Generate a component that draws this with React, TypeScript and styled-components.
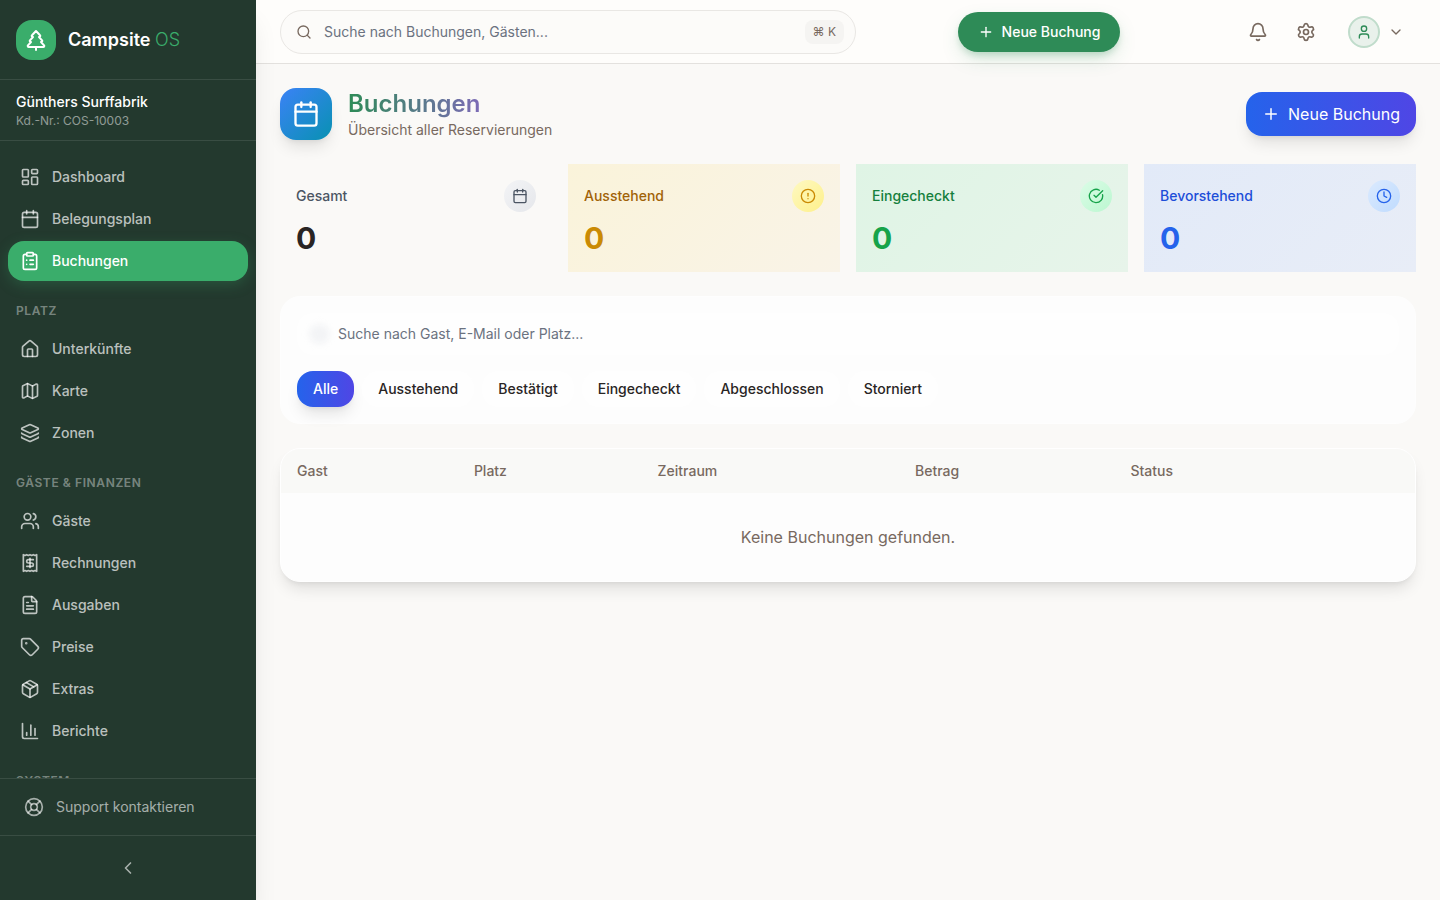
import React from "react";
import styled, { createGlobalStyle, css } from "styled-components";
import {
  LayoutDashboard, Calendar, ClipboardList, House, Map as MapIcon, Layers, Users, Receipt,
  FileText, Tag, Package, ChartColumn, LifeBuoy, ChevronLeft, ChevronDown, TreePine, Search,
  Plus, Bell, Settings, User, CircleAlert, CircleCheckBig, Clock,
  type LucideIcon,
} from "lucide-react";

const GlobalStyle = createGlobalStyle`
  *, *::before, *::after { box-sizing: border-box; }
  body {
    margin: 0;
    background: #faf9f7;
    color: #292524;
    font-family: Inter, "Liberation Sans", sans-serif;
    font-size: 16px;
    line-height: 24px;
  }
  button, input { font: inherit; color: inherit; }
  button { border: 0; background: none; padding: 0; cursor: pointer; }
  a { color: inherit; text-decoration: none; }
  h1, h2, p, ul { margin: 0; padding: 0; }
  ul { list-style: none; }
  svg { display: block; flex-shrink: 0; }
`;

const Shell = styled.div`
  display: flex;
  height: 100vh;
  overflow: hidden;
`;

/* ---------- Sidebar ---------- */

const Sidebar = styled.aside`
  display: flex;
  flex-direction: column;
  flex: 0 0 256px;
  z-index: 1;
  background: #23392e;
  color: #fff;
  box-shadow: 0 20px 25px -5px rgba(0, 0, 0, 0.1), 0 8px 10px -6px rgba(0, 0, 0, 0.1);
`;

const Brand = styled.a`
  display: flex;
  align-items: center;
  gap: 12px;
  height: 80px;
  padding: 0 16px;
  border-bottom: 1px solid rgba(255, 255, 255, 0.1);
`;

const BrandMark = styled.span`
  display: grid;
  place-items: center;
  width: 40px;
  height: 40px;
  border-radius: 16px;
  background: #3aad6b;
`;

const BrandName = styled.span`
  font-size: 18px;
  line-height: 28px;
  font-weight: 600;
`;

const BrandSuffix = styled.span`
  font-weight: 300;
  color: #3aad6b;
`;

const Tenant = styled.div`
  padding: 12px 16px 10px;
  border-bottom: 1px solid rgba(255, 255, 255, 0.1);
`;

const TenantName = styled.p`
  font-size: 14px;
  line-height: 20px;
  font-weight: 500;
`;

const TenantNumber = styled.p`
  font-size: 12px;
  line-height: 18px;
  color: rgba(255, 255, 255, 0.5);
`;

const Nav = styled.nav`
  flex: 1 1 0;
  min-height: 0;
  overflow-y: auto;
  scrollbar-width: none;
  padding: 16px 8px;
`;

const NavHeading = styled.h2`
  margin: 22px 0 10px;
  padding: 0 8px;
  font-size: 12px;
  line-height: 16px;
  font-weight: 600;
  letter-spacing: 0.05em;
  text-transform: uppercase;
  color: rgba(255, 255, 255, 0.4);
`;

const NavList = styled.ul`
  display: flex;
  flex-direction: column;
  gap: 2px;
`;

const NavLink = styled.a<{ $active?: boolean }>`
  display: flex;
  align-items: center;
  gap: 12px;
  height: 40px;
  padding: 0 12px;
  border-radius: 16px;
  font-size: 14px;
  line-height: 20px;
  font-weight: 500;
  color: rgba(255, 255, 255, 0.7);
  ${(p) => p.$active && css`
    color: #fff;
    background: #3aad6b;
    box-shadow: 0 4px 14px rgba(58, 173, 107, 0.25);
  `}
`;

const SupportBar = styled.div`
  padding: 8px;
  border-top: 1px solid rgba(255, 255, 255, 0.1);
`;

const SupportLink = styled.a`
  display: flex;
  align-items: center;
  gap: 12px;
  height: 40px;
  padding: 0 16px;
  font-size: 14px;
  line-height: 20px;
  color: rgba(255, 255, 255, 0.6);
`;

const CollapseBar = styled.div`
  display: flex;
  padding: 12px;
  border-top: 1px solid rgba(255, 255, 255, 0.1);
`;

const CollapseButton = styled.button`
  display: grid;
  place-items: center;
  flex: 1;
  height: 40px;
  color: rgba(255, 255, 255, 0.6);
`;

/* ---------- Top bar ---------- */

const Content = styled.div`
  display: flex;
  flex-direction: column;
  flex: 1;
  min-width: 0;
`;

const TopBar = styled.header`
  display: flex;
  align-items: center;
  height: 64px;
  padding: 0 24px;
  background: #fefdfb;
  border-bottom: 1px solid #e3e1de;
`;

const GlobalSearch = styled.label`
  display: flex;
  align-items: center;
  gap: 12px;
  flex: 0 1 576px;
  height: 44px;
  padding: 0 11px 0 15px;
  border: 1px solid #e9e7e4;
  border-radius: 22px;
  background: #fcfbf9;
  color: #78695f;
`;

const SearchInput = styled.input`
  flex: 1;
  min-width: 0;
  border: 0;
  outline: 0;
  padding: 0;
  background: none;
  font-size: 14px;
  line-height: 20px;
  &::placeholder { color: #6b7280; opacity: 1; }
`;

const Shortcut = styled.kbd`
  padding: 4px 8px;
  border-radius: 8px;
  background: #f5f4f2;
  font-family: inherit;
  font-size: 12px;
  line-height: 16px;
`;

const QuickCreate = styled.button`
  display: flex;
  align-items: center;
  gap: 8px;
  height: 40px;
  margin: 0 auto;
  padding: 0 20px;
  border-radius: 20px;
  background: #2e8b57;
  color: #fff;
  font-size: 14px;
  line-height: 20px;
  font-weight: 500;
  box-shadow: 0 4px 6px -1px rgba(46, 139, 87, 0.2), 0 8px 20px -4px rgba(46, 139, 87, 0.25);
`;

const Actions = styled.div`
  display: flex;
  align-items: center;
  gap: 4px;
  padding-left: 14px;
  color: #78695f;
`;

const IconButton = styled.button`
  display: grid;
  place-items: center;
  width: 44px;
  height: 44px;
`;

const AccountButton = styled.button`
  display: flex;
  align-items: center;
  gap: 8px;
  padding: 0 12px 0 16px;
`;

const Avatar = styled.span`
  display: grid;
  place-items: center;
  width: 32px;
  height: 32px;
  border: 2px solid #c0dccb;
  border-radius: 50%;
  background: #e9f1eb;
  color: #2e8b57;
`;

/* ---------- Page ---------- */

const Main = styled.main`
  display: flex;
  flex-direction: column;
  gap: 24px;
  flex: 1;
  overflow: auto;
  padding: 24px;
`;

const PageHead = styled.div`
  display: flex;
  align-items: center;
  gap: 16px;
`;

const PageIcon = styled.span`
  display: grid;
  place-items: center;
  width: 52px;
  height: 52px;
  border-radius: 16px;
  background: linear-gradient(135deg, #3b82f6, #0891b2);
  color: #fff;
  box-shadow: 0 10px 15px -3px rgba(0, 0, 0, 0.1), 0 4px 6px -4px rgba(0, 0, 0, 0.1);
`;

const PageTitle = styled.h1`
  width: fit-content;
  font-size: 24px;
  line-height: 32px;
  font-weight: 600;
  background: linear-gradient(90deg, #2e8b57, #7c6bb5);
  background-clip: text;
  -webkit-background-clip: text;
  color: transparent;
`;

const PageSubtitle = styled.p`
  font-size: 14px;
  line-height: 20px;
  color: #78695f;
`;

const PrimaryButton = styled.button`
  display: flex;
  align-items: center;
  gap: 8px;
  height: 44px;
  margin-left: auto;
  padding: 0 16px;
  border-radius: 16px;
  background: linear-gradient(90deg, #2563eb, #4f46e5);
  color: #fff;
  box-shadow: 0 10px 15px -3px rgba(0, 0, 0, 0.1), 0 4px 6px -4px rgba(0, 0, 0, 0.1);
`;

const Stats = styled.section`
  display: grid;
  grid-template-columns: repeat(4, 1fr);
  gap: 16px;
`;

type Tone = "neutral" | "yellow" | "green" | "blue";

const tones: Record<Tone, { card: string; label: string; value: string; icon: string; badge: string }> = {
  neutral: { card: "none", label: "#4b5563", value: "#292524", icon: "#4b5563", badge: "linear-gradient(135deg, #f3f4f6, #e5e7eb)" },
  yellow: { card: "linear-gradient(135deg, #faf3da, #f9f3e7)", label: "#a16207", value: "#ca8a04", icon: "#ca8a04", badge: "linear-gradient(135deg, #fef9c3, #fef08a)" },
  green: { card: "linear-gradient(135deg, #dff4e5, #e7f4ea)", label: "#15803d", value: "#16a34a", icon: "#16a34a", badge: "linear-gradient(135deg, #dcfce7, #bbf7d0)" },
  blue: { card: "linear-gradient(135deg, #e2eaf8, #e8edf7)", label: "#1d4ed8", value: "#2563eb", icon: "#2563eb", badge: "linear-gradient(135deg, #dbeafe, #bfdbfe)" },
};

const StatCard = styled.article<{ $tone: Tone }>`
  display: flex;
  flex-direction: column;
  gap: 8px;
  padding: 16px;
  background: ${(p) => tones[p.$tone].card};
`;

const StatHead = styled.div`
  display: flex;
  align-items: center;
  justify-content: space-between;
`;

const StatLabel = styled.h2<{ $tone: Tone }>`
  font-size: 14px;
  line-height: 20px;
  font-weight: 500;
  color: ${(p) => tones[p.$tone].label};
`;

const StatBadge = styled.span<{ $tone: Tone }>`
  display: grid;
  place-items: center;
  width: 32px;
  height: 32px;
  border-radius: 50%;
  background: ${(p) => tones[p.$tone].badge};
  color: ${(p) => tones[p.$tone].icon};
`;

const StatValue = styled.p<{ $tone: Tone }>`
  font-size: 30px;
  line-height: 36px;
  font-weight: 700;
  color: ${(p) => tones[p.$tone].value};
`;

const FilterCard = styled.section`
  display: flex;
  flex-direction: column;
  gap: 16px;
  padding: 16px;
  border: 1px solid #fefefe;
  border-radius: 20px;
  background: #fdfdfd;
`;

const FilterSearch = styled.label`
  display: flex;
  align-items: center;
  gap: 8px;
  height: 42px;
  padding: 0 12px;
  border-radius: 16px;
  background: #fefefe;
`;

const SoftGlyph = styled.span`
  width: 21px;
  height: 20px;
  border-radius: 50%;
  background: #f3f4f6;
  filter: blur(3px);
`;

const FilterRow = styled.div`
  display: flex;
  flex-wrap: wrap;
  gap: 8px;
`;

const FilterPill = styled.button<{ $active?: boolean }>`
  height: 36px;
  padding: 0 16px;
  border-radius: 16px;
  background: #fefefe;
  font-size: 14px;
  line-height: 20px;
  font-weight: 500;
  ${(p) => p.$active && css`
    background: linear-gradient(90deg, #2563eb, #4f46e5);
    color: #fff;
    box-shadow: 0 10px 15px -3px rgba(0, 0, 0, 0.1), 0 4px 6px -4px rgba(0, 0, 0, 0.1);
  `}
`;

const TableCard = styled.section`
  overflow: hidden;
  flex-shrink: 0;
  border: 1px solid #fff;
  border-radius: 20px;
  background: #fdfdfd;
  box-shadow: 0 10px 15px -3px rgba(0, 0, 0, 0.1), 0 4px 6px -4px rgba(0, 0, 0, 0.1);
`;

const Table = styled.table`
  width: 100%;
  table-layout: fixed;
  border-collapse: collapse;
  color: #78695f;
`;

const Col = styled.col<{ $share: number }>`
  width: ${(p) => p.$share}%;
`;

const HeadCell = styled.th`
  padding: 12px 16px;
  background: #f9f9f7;
  text-align: left;
  font-size: 14px;
  line-height: 20px;
  font-weight: 500;
`;

const EmptyCell = styled.td`
  padding: 32px 16px;
  text-align: center;
`;

/* ---------- Data ---------- */

type NavEntry = { label: string; icon: LucideIcon };

const navGroups: { heading?: string; items: NavEntry[] }[] = [
  {
    items: [
      { label: "Dashboard", icon: LayoutDashboard },
      { label: "Belegungsplan", icon: Calendar },
      { label: "Buchungen", icon: ClipboardList },
    ],
  },
  {
    heading: "Platz",
    items: [
      { label: "Unterkünfte", icon: House },
      { label: "Karte", icon: MapIcon },
      { label: "Zonen", icon: Layers },
    ],
  },
  {
    heading: "Gäste & Finanzen",
    items: [
      { label: "Gäste", icon: Users },
      { label: "Rechnungen", icon: Receipt },
      { label: "Ausgaben", icon: FileText },
      { label: "Preise", icon: Tag },
      { label: "Extras", icon: Package },
      { label: "Berichte", icon: ChartColumn },
    ],
  },
  { heading: "System", items: [] },
];

const stats: { label: string; tone: Tone; icon: LucideIcon }[] = [
  { label: "Gesamt", tone: "neutral", icon: Calendar },
  { label: "Ausstehend", tone: "yellow", icon: CircleAlert },
  { label: "Eingecheckt", tone: "green", icon: CircleCheckBig },
  { label: "Bevorstehend", tone: "blue", icon: Clock },
];

const filters = ["Alle", "Ausstehend", "Bestätigt", "Eingecheckt", "Abgeschlossen", "Storniert"];

const columns = [
  { label: "Gast", share: 15.6 },
  { label: "Platz", share: 16.2 },
  { label: "Zeitraum", share: 22.7 },
  { label: "Betrag", share: 19 },
  { label: "Status", share: 26.5 },
];

const activePage = "Buchungen";

export default function App() {
  return (
    <>
      <GlobalStyle />
      <Shell>
        <Sidebar>
          <Brand href="#">
            <BrandMark><TreePine size={24} /></BrandMark>
            <BrandName>Campsite <BrandSuffix>OS</BrandSuffix></BrandName>
          </Brand>
          <Tenant>
            <TenantName>Günthers Surffabrik</TenantName>
            <TenantNumber>Kd.-Nr.: COS-10003</TenantNumber>
          </Tenant>
          <Nav aria-label="Hauptnavigation">
            {navGroups.map((group, i) => (
              <React.Fragment key={i}>
                {group.heading && <NavHeading>{group.heading}</NavHeading>}
                <NavList>
                  {group.items.map(({ label, icon: Icon }) => {
                    const active = label === activePage;
                    return (
                      <li key={label}>
                        <NavLink href="#" $active={active} aria-current={active ? "page" : undefined}>
                          <Icon size={20} />
                          {label}
                        </NavLink>
                      </li>
                    );
                  })}
                </NavList>
              </React.Fragment>
            ))}
          </Nav>
          <SupportBar>
            <SupportLink href="#"><LifeBuoy size={20} />Support kontaktieren</SupportLink>
          </SupportBar>
          <CollapseBar>
            <CollapseButton aria-label="Seitenleiste einklappen"><ChevronLeft size={20} /></CollapseButton>
          </CollapseBar>
        </Sidebar>

        <Content>
          <TopBar>
            <GlobalSearch>
              <Search size={16} />
              <SearchInput type="search" aria-label="Suche" placeholder="Suche nach Buchungen, Gästen..." />
              <Shortcut>⌘ K</Shortcut>
            </GlobalSearch>
            <QuickCreate><Plus size={16} />Neue Buchung</QuickCreate>
            <Actions>
              <IconButton aria-label="Benachrichtigungen"><Bell size={20} /></IconButton>
              <IconButton aria-label="Einstellungen"><Settings size={20} /></IconButton>
              <AccountButton aria-label="Konto">
                <Avatar><User size={16} /></Avatar>
                <ChevronDown size={16} />
              </AccountButton>
            </Actions>
          </TopBar>

          <Main>
            <PageHead>
              <PageIcon><Calendar size={28} /></PageIcon>
              <div>
                <PageTitle>Buchungen</PageTitle>
                <PageSubtitle>Übersicht aller Reservierungen</PageSubtitle>
              </div>
              <PrimaryButton><Plus size={18} />Neue Buchung</PrimaryButton>
            </PageHead>

            <Stats>
              {stats.map(({ label, tone, icon: Icon }) => (
                <StatCard key={label} $tone={tone}>
                  <StatHead>
                    <StatLabel $tone={tone}>{label}</StatLabel>
                    <StatBadge $tone={tone}><Icon size={16} /></StatBadge>
                  </StatHead>
                  <StatValue $tone={tone}>0</StatValue>
                </StatCard>
              ))}
            </Stats>

            <FilterCard>
              <FilterSearch>
                <SoftGlyph />
                <SearchInput type="search" aria-label="Buchungen durchsuchen" placeholder="Suche nach Gast, E-Mail oder Platz..." />
              </FilterSearch>
              <FilterRow>
                {filters.map((label, i) => (
                  <FilterPill key={label} $active={i === 0} aria-pressed={i === 0}>{label}</FilterPill>
                ))}
              </FilterRow>
            </FilterCard>

            <TableCard>
              <Table>
                <colgroup>
                  {columns.map((c) => <Col key={c.label} $share={c.share} />)}
                </colgroup>
                <thead>
                  <tr>{columns.map((c) => <HeadCell key={c.label} scope="col">{c.label}</HeadCell>)}</tr>
                </thead>
                <tbody>
                  <tr><EmptyCell colSpan={columns.length}>Keine Buchungen gefunden.</EmptyCell></tr>
                </tbody>
              </Table>
            </TableCard>
          </Main>
        </Content>
      </Shell>
    </>
  );
}
